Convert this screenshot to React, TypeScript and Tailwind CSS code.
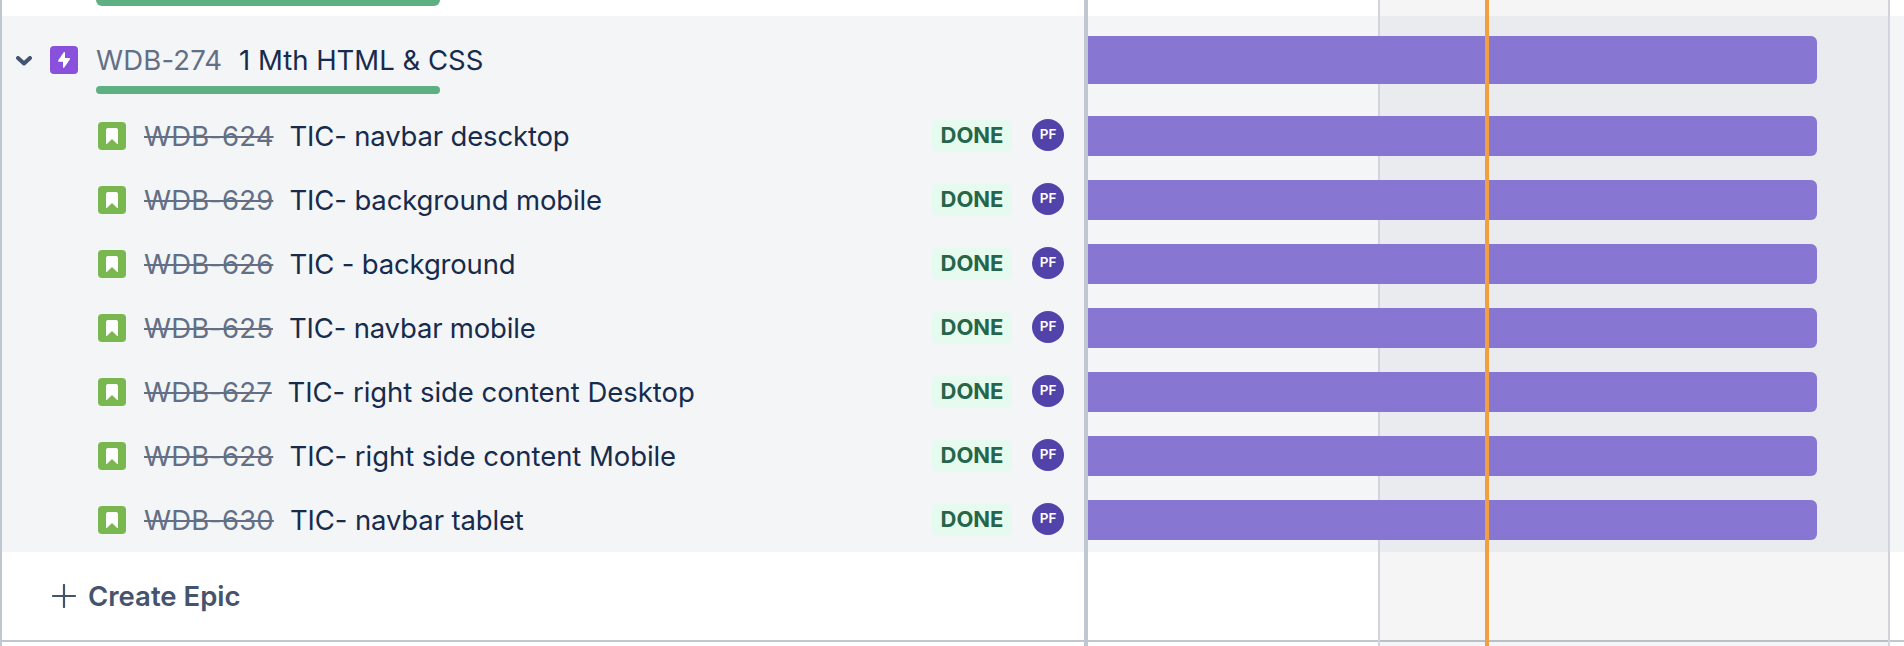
import React from "react";

type Issue = { key: string; title: string; keyCls: string; titleCls: string };

const issues: Issue[] = [
  { key: "WDB-624", title: "TIC- navbar descktop", keyCls: "w-[128.5px]", titleCls: "tracking-[-0.17px]" },
  { key: "WDB-629", title: "TIC- background mobile", keyCls: "w-[128.5px]", titleCls: "tracking-[-0.14px]" },
  { key: "WDB-626", title: "TIC - background", keyCls: "w-[128.5px]", titleCls: "tracking-[-0.17px]" },
  { key: "WDB-625", title: "TIC- navbar mobile", keyCls: "w-[128px]", titleCls: "tracking-[-0.19px]" },
  { key: "WDB-627", title: "TIC- right side content Desktop", keyCls: "w-[126.5px]", titleCls: "tracking-[-0.04px]" },
  { key: "WDB-628", title: "TIC- right side content Mobile", keyCls: "w-[128.5px]", titleCls: "tracking-[-0.06px]" },
  { key: "WDB-630", title: "TIC- navbar tablet", keyCls: "w-[129px]", titleCls: "tracking-[-0.14px]" },
];

function StoryIcon() {
  return (
    <svg viewBox="0 0 28 28" className="size-7 shrink-0">
      <rect width="28" height="28" rx="4" fill="#79b74f" />
      <path d="M10 6h8a2 2 0 0 1 2 2v13.6a.5.5 0 0 1-.85.35L14 16.9l-5.15 5.05A.5.5 0 0 1 8 21.6V8a2 2 0 0 1 2-2z" fill="#fff" />
    </svg>
  );
}

function EpicIcon() {
  return (
    <svg viewBox="0 0 28 28" className="ml-[18px] size-7 shrink-0">
      <rect width="28" height="28" rx="4" fill="#8950dc" />
      <path d="M13.6 6.4 8.3 14.2c-.5.8 0 1.5.8 1.5H13v5.5c0 .9.8 1 1.3.3l5.5-8.1c.5-.8.1-1.4-.7-1.4H15V6.7c0-.9-.9-1-1.4-.3z" fill="#fff" />
    </svg>
  );
}

function IssueRow({ issue }: { issue: Issue }) {
  return (
    <div className="flex h-16 items-center pr-5 pl-24">
      <StoryIcon />
      <span className={`ml-[18px] shrink-0 pt-0.5 tracking-[0.12px] text-[#626f86] line-through decoration-2 ${issue.keyCls}`}>
        {issue.key}
      </span>
      <span className={`ml-[17px] flex-1 pt-0.5 text-[#172b4d] ${issue.titleCls}`}>{issue.title}</span>
      <span className="flex h-8 w-20 items-center justify-center rounded-md bg-[#e6fbf0] pb-0.5 text-[22px] font-bold text-[#266549]">
        DONE
      </span>
      <span className="mb-0.5 ml-5 flex size-8 items-center justify-center rounded-full bg-[#5243aa] text-[13.5px] font-semibold text-white">
        PF
      </span>
    </div>
  );
}

export default function App() {
  return (
    <div className="relative flex h-[646px] w-[1904px] overflow-hidden bg-white font-['Inter','Liberation_Sans',sans-serif] text-[27.5px] leading-none whitespace-nowrap">
      <section className="flex w-[1088px] shrink-0 flex-col border-r-4 border-l-2 border-[#c1c7d0]">
        <div className="h-4 pl-[94px]">
          <div className="h-1.5 w-[344px] rounded-b-full bg-[#5eb082]" />
        </div>
        <div className="bg-[#f4f5f7]">
          <div className="flex h-[88px] flex-col pt-[26px]">
            <div className="flex h-9 items-center pl-3.5">
              <svg viewBox="0 0 16 10" className="mt-0.5 h-2.5 w-4 shrink-0">
                <path d="M2 2l6 5.5L14 2" fill="none" stroke="#44546f" strokeWidth="4" strokeLinecap="round" strokeLinejoin="round" />
              </svg>
              <EpicIcon />
              <span className="ml-[18px] w-[126px] pt-0.5 tracking-[0.15px] text-[#626f86]">WDB-274</span>
              <span className="ml-[17px] pt-0.5 text-[#172b4d]">1 Mth HTML &amp; CSS</span>
            </div>
            <div className="mt-2 ml-[94px] h-2 w-[344px] rounded-full bg-[#5eb082]" />
          </div>
          {issues.map((i) => (
            <IssueRow key={i.key} issue={i} />
          ))}
        </div>
        <div className="flex h-[88px] items-center pl-[50px] text-[#44546f]">
          <svg viewBox="0 0 24 24" className="size-6 shrink-0">
            <path d="M12 1v22M1 12h22" stroke="#44546f" strokeWidth="2.2" strokeLinecap="round" />
          </svg>
          <span className="ml-3 pt-0.5 font-semibold">Create Epic</span>
        </div>
        <div className="h-0.5 bg-[#c1c7d0]" />
      </section>

      <section className="flex flex-1 flex-col">
        <div className="h-4" />
        <div className="h-[536px] bg-[#f4f5f7]" />
        <div className="h-[88px]" />
        <div className="h-0.5 bg-[#c1c7d0]" />
      </section>

      <div className="absolute top-0 left-[1378px] h-full w-[512px] border-x-2 border-[#d2d4db] bg-[#050a18]/4" />
      <div className="absolute top-4 left-[1088px] w-[729px]">
        <div className="flex h-[88px] items-center">
          <div className="h-12 w-full rounded-r-md bg-[#8777d2]" />
        </div>
        {issues.map((i) => (
          <div key={i.key} className="flex h-16 items-center">
            <div className="h-10 w-full rounded-r-md bg-[#8777d2]" />
          </div>
        ))}
      </div>
      <div className="absolute top-0 left-[1485px] h-full w-1 bg-[#f29f41]" />
    </div>
  );
}
